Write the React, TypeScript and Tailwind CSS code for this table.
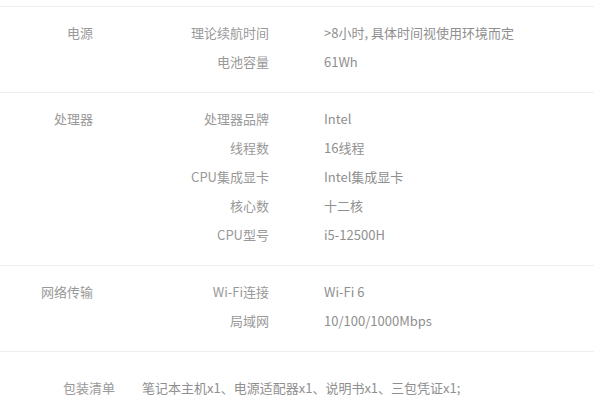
const groups = [
  {
    title: '电源',
    rows: [
      ['理论续航时间', '>8小时, 具体时间视使用环境而定'],
      ['电池容量', '61Wh'],
    ],
  },
  {
    title: '处理器',
    rows: [
      ['处理器品牌', 'Intel'],
      ['线程数', '16线程'],
      ['CPU集成显卡', 'Intel集成显卡'],
      ['核心数', '十二核'],
      ['CPU型号', 'i5-12500H'],
    ],
  },
  {
    title: '网络传输',
    rows: [
      ['Wi-Fi连接', 'Wi-Fi 6'],
      ['局域网', '10/100/1000Mbps'],
    ],
  },
];

const App = () => {
  return (
    <div
      className="w-[594px] h-[408px] bg-white overflow-hidden pt-[6px] text-[13px] text-[#999]"
      style={{ fontFamily: '"Microsoft YaHei", "Noto Sans CJK SC", "Liberation Sans", sans-serif' }}
    >
      {groups.map((g) => (
        <div key={g.title} className="flex border-t border-[#eee] pt-[11px] pb-[16px]">
          <div className="w-[93px] shrink-0 text-right leading-[29px]">{g.title}</div>
          <div className="flex flex-col">
            {g.rows.map(([k, v]) => (
              <div key={k} className="flex leading-[29px]">
                <div className="w-[176px] text-right">{k}</div>
                <div className="pl-[55px] text-[#8f8f8f]">{v}</div>
              </div>
            ))}
          </div>
        </div>
      ))}
      {/* 包装清单 */}
      <div className="flex border-t border-[#eee] pt-[21px] leading-[29px]">
        <div className="w-[115px] shrink-0 text-right">包装清单</div>
        <div className="pl-[27px] text-[#8f8f8f]">笔记本主机x1、电源适配器x1、说明书x1、三包凭证x1;</div>
      </div>
    </div>
  );
};

export default App;
